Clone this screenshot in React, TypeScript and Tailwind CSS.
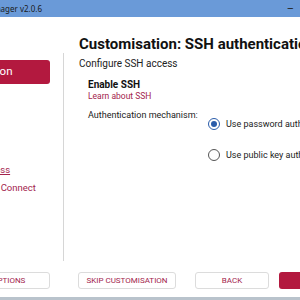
import { useState } from 'react';

type NavLink = {
  name: string,
  current?: boolean,
}

const links: NavLink[] = [
  { name: 'Hostname' },
  { name: 'Localisation' },
  { name: 'User' },
  { name: 'Wi-Fi' },
  { name: 'Remote access', current: true },
  { name: 'Raspberry Pi Connect' },
]

const Radio = (props: { checked: boolean, label: string, onClick: () => void }) => {
  return (
    <button onClick={props.onClick} className="flex items-center gap-[6px] text-left">
      <span className={"w-[12px] h-[12px] rounded-full border flex items-center justify-center shrink-0 " + (props.checked ? "border-[#2a5caa]" : "border-[#555]")}>
        {props.checked ? <span className="w-[6px] h-[6px] rounded-full bg-[#2a5caa]" /> : null}
      </span>
      <span className="whitespace-nowrap text-[9px] leading-[12px] text-[#222]">{props.label}</span>
    </button>
  )
}

const App = () => {

  const [mechanism, setMechanism] = useState('password');

  return (
    <div className="w-[300px] h-[300px] overflow-hidden bg-white flex flex-col font-['Roboto',sans-serif]">
      {/* window title bar */}
      <div className="h-[17px] shrink-0 bg-[#6a9ad8] flex items-center justify-between">
        <div className="w-[42px] flex justify-end">
          <span className="whitespace-nowrap text-[8px] text-[#1a1a1a] font-['Noto_Sans',sans-serif]">Raspberry Pi Imager v2.0.6</span>
        </div>
        <span className="mr-[6px] text-[11px] text-[#222] leading-none">–</span>
      </div>

      <div className="flex flex-1 min-h-0">
        {/* sidebar */}
        <div className="w-[63px] shrink-0 pt-[43px] pb-[2px] flex">
          <div className="ml-[-70px] w-[120px] shrink-0">
            <div className="h-[24px] rounded-[3px] bg-[#b3193f] flex items-center pl-[8px] text-white text-[11.5px]">
              Customisation
            </div>
            <div className="mt-[9px] flex flex-col gap-[8px] pl-[15px]">
              {links.map((link) => (
                <a key={link.name} className={"whitespace-nowrap text-[9.5px] text-[#a3244d] leading-[10px] " + (link.current ? "underline" : "")}>
                  {link.name}
                </a>
              ))}
            </div>
          </div>
        </div>
        <div className="w-px bg-[#d6d6d6] mt-[36px] mb-[4px]" />

        {/* page */}
        <div className="flex-1 min-w-0 pl-[15px] pt-[18px]">
          <h1 className="whitespace-nowrap text-[15px] font-bold text-[#111] leading-[18px]">Customisation: SSH authentication</h1>
          <p className="mt-[5px] whitespace-nowrap text-[10px] leading-[12px] text-[#222]">Configure SSH access</p>
          <div className="pl-[9px] mt-[9px]">
            <div className="text-[10px] font-bold text-[#111] leading-[12px]">Enable SSH</div>
            <a className="block text-[8.5px] text-[#a3244d] leading-[10px]">Learn about SSH</a>
            <div className="mt-[8px] flex">
              <span className="w-[120px] shrink-0 whitespace-nowrap text-[9px] leading-[12px] text-[#222]">Authentication mechanism:</span>
              <div className="flex flex-col gap-[19px] pt-[9px]">
                <Radio checked={mechanism === 'password'} label="Use password authentication" onClick={() => setMechanism('password')} />
                <Radio checked={mechanism === 'key'} label="Use public key authentication" onClick={() => setMechanism('key')} />
              </div>
            </div>
          </div>
        </div>
      </div>

      {/* footer buttons */}
      <div className="h-[32px] shrink-0 flex items-center pb-[1px]">
        <button className="ml-[-50px] w-[100px] h-[17px] shrink-0 border border-[#dcdcdc] rounded-[3px] text-[8px] text-[#a3244d] whitespace-nowrap">APP OPTIONS</button>
        <button className="ml-[28px] w-[98px] h-[17px] shrink-0 border border-[#dcdcdc] rounded-[3px] text-[8px] text-[#a3244d] whitespace-nowrap">SKIP CUSTOMISATION</button>
        <button className="ml-[19px] w-[74px] h-[17px] shrink-0 border border-[#dcdcdc] rounded-[3px] text-[8px] text-[#a3244d]">BACK</button>
        <button className="ml-[10px] w-[74px] h-[17px] shrink-0 rounded-[3px] bg-[#b3193f] text-[8px] text-white">NEXT</button>
      </div>
      <div className="h-[3px] shrink-0 bg-[#b9c3cc]" />
    </div>
  )
}

export default App
